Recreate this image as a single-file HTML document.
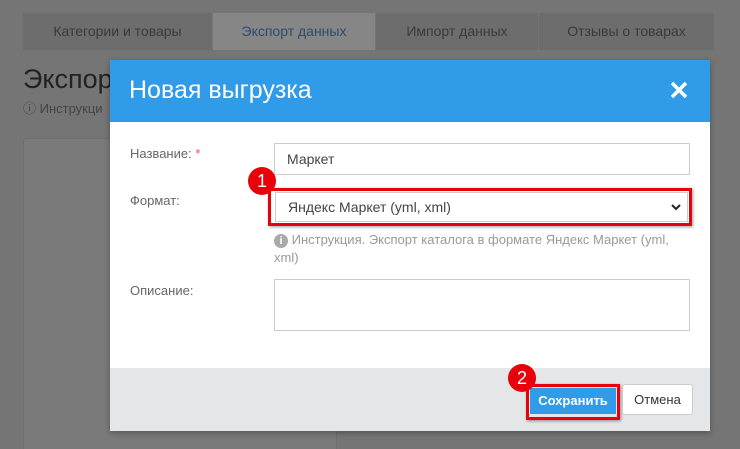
<!DOCTYPE html>
<html><head><meta charset="utf-8"><style>
html,body{margin:0;width:740px;height:449px;overflow:hidden}
body{background:#757575;font-family:"Liberation Sans","DejaVu Sans",sans-serif;position:relative}
.a{position:absolute}
.tab{position:absolute;top:13px;height:37px;background:#6d6d6d;color:#3a3a3a;font-size:14px;line-height:37px;text-align:center}
.lbl{position:absolute;left:130px;font-size:13px;color:#666}
.inp{position:absolute;left:274px;width:416px;background:#fff;border:1px solid #ccc;box-sizing:border-box;font-size:14px;color:#444;padding-left:12px}
.badge{position:absolute;width:28px;height:28px;border-radius:50%;background:#e8000b;color:#fff;font-size:18px;text-align:center;line-height:28px}
</style></head><body>
<div class="tab" style="left:23px;width:189px">Категории и товары</div>
<div class="tab" style="left:213px;width:162px;background:#868686;color:#2c4a6e">Экспорт данных</div>
<div class="tab" style="left:376px;width:162px">Импорт данных</div>
<div class="tab" style="left:539px;width:175px">Отзывы о товарах</div>
<div class="a" style="left:23px;top:64px;font-size:27px;color:#222">Экспорт</div>
<div class="a" style="left:23px;top:98px;font-size:13px;color:#444">ⓘ Инструкци</div>
<div class="a" style="left:23px;top:138px;width:312px;height:330px;background:#7a7a7a;border:1px solid #6e6e6e;border-radius:3px"></div>

<div class="a" style="left:110px;top:60px;width:600px;height:371px;background:#fff;box-shadow:0 2px 6px rgba(0,0,0,.3)">
 <div class="a" style="left:0;top:0;width:600px;height:62px;background:#2f9be9"></div>
 <div class="a" style="left:19px;top:16px;font-size:25px;color:#fff">Новая выгрузка</div>
 <svg class="a" style="left:560px;top:21px" width="18" height="18" viewBox="0 0 18 18"><path d="M2 2L16 16M16 2L2 16" stroke="#fff" stroke-width="3.5"/></svg>
 <div class="a" style="left:0;top:308px;width:600px;height:63px;background:#e5e6e8"></div>
</div>
<div class="lbl" style="top:146px">Название: <span style="color:#e55">*</span></div>
<div class="lbl" style="top:193px">Формат:</div>
<div class="lbl" style="top:283px">Описание:</div>
<div class="inp" style="top:143px;height:32px;line-height:30px">Маркет</div>
<div class="a" style="left:268px;top:188px;width:418px;height:32px;border:3px solid #e8000b;box-shadow:1px 1px 3px rgba(0,0,0,.4)"></div>
<div class="inp" style="top:192px;height:30px;line-height:28px;left:275px;width:413px">Яндекс Маркет (yml, xml)<svg style="position:absolute;right:6px;top:11px" width="10" height="7" viewBox="0 0 10 7"><path d="M1 1L5 5L9 1" stroke="#222" stroke-width="2" fill="none"/></svg></div>
<div class="a" style="left:274px;top:231px;width:420px;font-size:13px;color:#999;line-height:18px"><span style="display:inline-block;width:14px;height:14px;border-radius:50%;background:#aaa;color:#fff;font-size:11px;text-align:center;line-height:14px;font-weight:bold">i</span> Инструкция. Экспорт каталога в формате Яндекс Маркет (yml, xml)</div>
<div class="inp" style="top:279px;height:52px"></div>
<div class="badge" style="left:248px;top:167px">1</div>
<div class="a" style="left:526px;top:384px;width:88px;height:30px;border:3px solid #e8000b;box-shadow:1px 1px 3px rgba(0,0,0,.4)"></div>
<div class="a" style="left:530px;top:388px;width:86px;height:26px;background:#2f9be9;color:#fff;font-size:13px;font-weight:bold;text-align:center;line-height:26px">Сохранить</div>
<div class="a" style="left:622px;top:384px;width:71px;height:31px;background:#fff;border:1px solid #ccc;box-sizing:border-box;border-radius:3px;font-size:13px;color:#333;text-align:center;line-height:29px">Отмена</div>
<div class="badge" style="left:508px;top:364px">2</div>
</body></html>
